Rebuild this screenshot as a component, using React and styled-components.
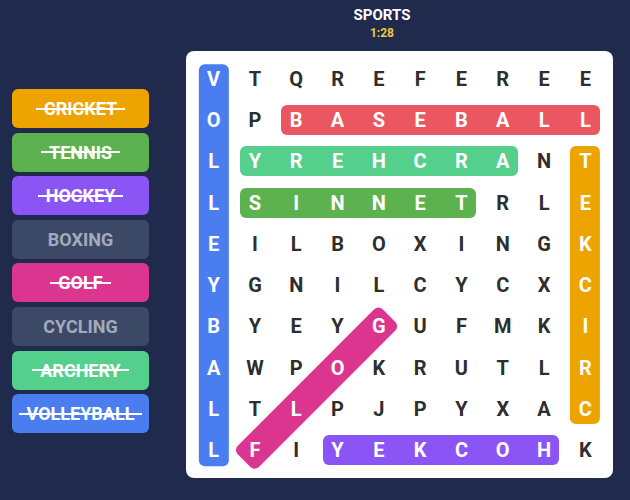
import React from "react";
import styled, { createGlobalStyle } from "styled-components";

const GlobalStyle = createGlobalStyle`
  html, body { margin: 0; padding: 0; background: #1f2a4c; }
  body { font-family: Roboto, "Noto Sans", Arial, sans-serif; }
`;

const GRID = [
  "VTQREFEREE",
  "OPBASEBALL",
  "LYREHCRANT",
  "LSINNETRLE",
  "EILBOXINGK",
  "YGNILCYCXC",
  "BYEYGUFMKI",
  "AWPOKRUTLR",
  "LTLPJPYXAC",
  "LFIYEKCOHK",
];

const COLORS = {
  blue: "#4a7ef0",
  red: "#eb5760",
  mint: "#55cf8c",
  green: "#5cb24e",
  orange: "#eea400",
  purple: "#8b55f6",
  pink: "#dc3590",
  grey: "#3c4966",
};

const WORDS = [
  { name: "CRICKET", color: COLORS.orange, found: true },
  { name: "TENNIS", color: COLORS.green, found: true },
  { name: "HOCKEY", color: COLORS.purple, found: true },
  { name: "BOXING", color: COLORS.grey, found: false },
  { name: "GOLF", color: COLORS.pink, found: true },
  { name: "CYCLING", color: COLORS.grey, found: false },
  { name: "ARCHERY", color: COLORS.mint, found: true },
  { name: "VOLLEYBALL", color: COLORS.blue, found: true },
];

// [row, col] start and end (straight lines)
const LINES = [
  { from: [0, 0], to: [9, 0], color: COLORS.blue },
  { from: [1, 2], to: [1, 9], color: COLORS.red },
  { from: [2, 1], to: [2, 7], color: COLORS.mint },
  { from: [3, 1], to: [3, 6], color: COLORS.green },
  { from: [2, 9], to: [8, 9], color: COLORS.orange },
  { from: [9, 3], to: [9, 8], color: COLORS.purple },
  { from: [9, 1], to: [6, 4], color: COLORS.pink },
];

const CELL = 41.3;
const PAD = 7;
const BAR = 30;

const Page = styled.div`
  width: 630px;
  height: 500px;
  display: flex;
  flex-direction: column;
  overflow: hidden;
`;

const Header = styled.header`
  display: flex;
  flex-direction: column;
  align-items: center;
  padding: 6px 0 0 134px;
  height: 45px;
  box-sizing: border-box;
`;

const Title = styled.div`
  color: #ffffff;
  font-weight: 700;
  font-size: 15px;
  line-height: 18px;
`;

const Timer = styled.div`
  color: #f0c83a;
  font-weight: 700;
  font-size: 12px;
  line-height: 14px;
  margin-top: 2px;
`;

const Content = styled.main`
  display: flex;
  align-items: flex-start;
  padding-top: 6px;
`;

const WordList = styled.ul`
  list-style: none;
  margin: 38px 0 0 12px;
  padding: 0;
  width: 137px;
  display: flex;
  flex-direction: column;
  gap: 4.6px;
`;

const WordChip = styled.li`
  height: 39px;
  border-radius: 6px;
  background: ${(p) => p.$color};
  display: flex;
  align-items: center;
  justify-content: center;
  font-size: 18px;
  font-weight: 700;
  color: ${(p) => (p.$found ? "#ffffff" : "#a3aabd")};
`;

const WordText = styled.span`
  position: relative;
  &::after {
    content: "";
    display: ${(p) => (p.$found ? "block" : "none")};
    position: absolute;
    left: -8px;
    right: -8px;
    top: 50%;
    height: 2px;
    margin-top: -1px;
    background: #ffffff;
  }
`;

const Board = styled.div`
  position: relative;
  margin-left: 37px;
  width: ${CELL * 10 + PAD * 2}px;
  height: ${CELL * 10 + PAD * 2}px;
  box-sizing: border-box;
  padding: ${PAD}px;
  background: #ffffff;
  border-radius: 8px;
  display: grid;
  grid-template-columns: repeat(10, 1fr);
  grid-template-rows: repeat(10, 1fr);
`;

const Highlight = styled.div`
  position: absolute;
  height: ${BAR}px;
  border-radius: 6px;
  background: ${(p) => p.$color};
  transform-origin: center center;
  z-index: 0;
`;

const Cell = styled.div`
  position: relative;
  z-index: 1;
  display: flex;
  align-items: center;
  justify-content: center;
  font-size: 20px;
  font-weight: 700;
  color: ${(p) => (p.$lit ? "#ffffff" : "#2e2e2e")};
`;

function cellsOf(line) {
  const [r1, c1] = line.from;
  const [r2, c2] = line.to;
  const n = Math.max(Math.abs(r2 - r1), Math.abs(c2 - c1));
  const dr = Math.sign(r2 - r1);
  const dc = Math.sign(c2 - c1);
  const out = [];
  for (let i = 0; i <= n; i++) out.push(`${r1 + dr * i},${c1 + dc * i}`);
  return out;
}

function barStyle(line) {
  const [r1, c1] = line.from;
  const [r2, c2] = line.to;
  const x1 = PAD + c1 * CELL + CELL / 2;
  const y1 = PAD + r1 * CELL + CELL / 2;
  const x2 = PAD + c2 * CELL + CELL / 2;
  const y2 = PAD + r2 * CELL + CELL / 2;
  const len = Math.hypot(x2 - x1, y2 - y1) + BAR;
  const angle = (Math.atan2(y2 - y1, x2 - x1) * 180) / Math.PI;
  const cx = (x1 + x2) / 2;
  const cy = (y1 + y2) / 2;
  return {
    width: `${len}px`,
    left: `${cx - len / 2}px`,
    top: `${cy - BAR / 2}px`,
    transform: `rotate(${angle}deg)`,
  };
}

export default function App() {
  const lit = new Set(LINES.flatMap(cellsOf));
  return (
    <Page>
      <GlobalStyle />
      <Header>
        <Title>SPORTS</Title>
        <Timer>1:28</Timer>
      </Header>
      <Content>
        <WordList>
          {WORDS.map((w) => (
            <WordChip key={w.name} $color={w.color} $found={w.found}>
              <WordText $found={w.found}>{w.name}</WordText>
            </WordChip>
          ))}
        </WordList>
        <Board>
          {LINES.map((l, i) => (
            <Highlight key={i} $color={l.color} style={barStyle(l)} />
          ))}
          {GRID.map((row, r) =>
            row.split("").map((ch, c) => (
              <Cell key={`${r}-${c}`} $lit={lit.has(`${r},${c}`)}>
                {ch}
              </Cell>
            ))
          )}
        </Board>
      </Content>
    </Page>
  );
}
